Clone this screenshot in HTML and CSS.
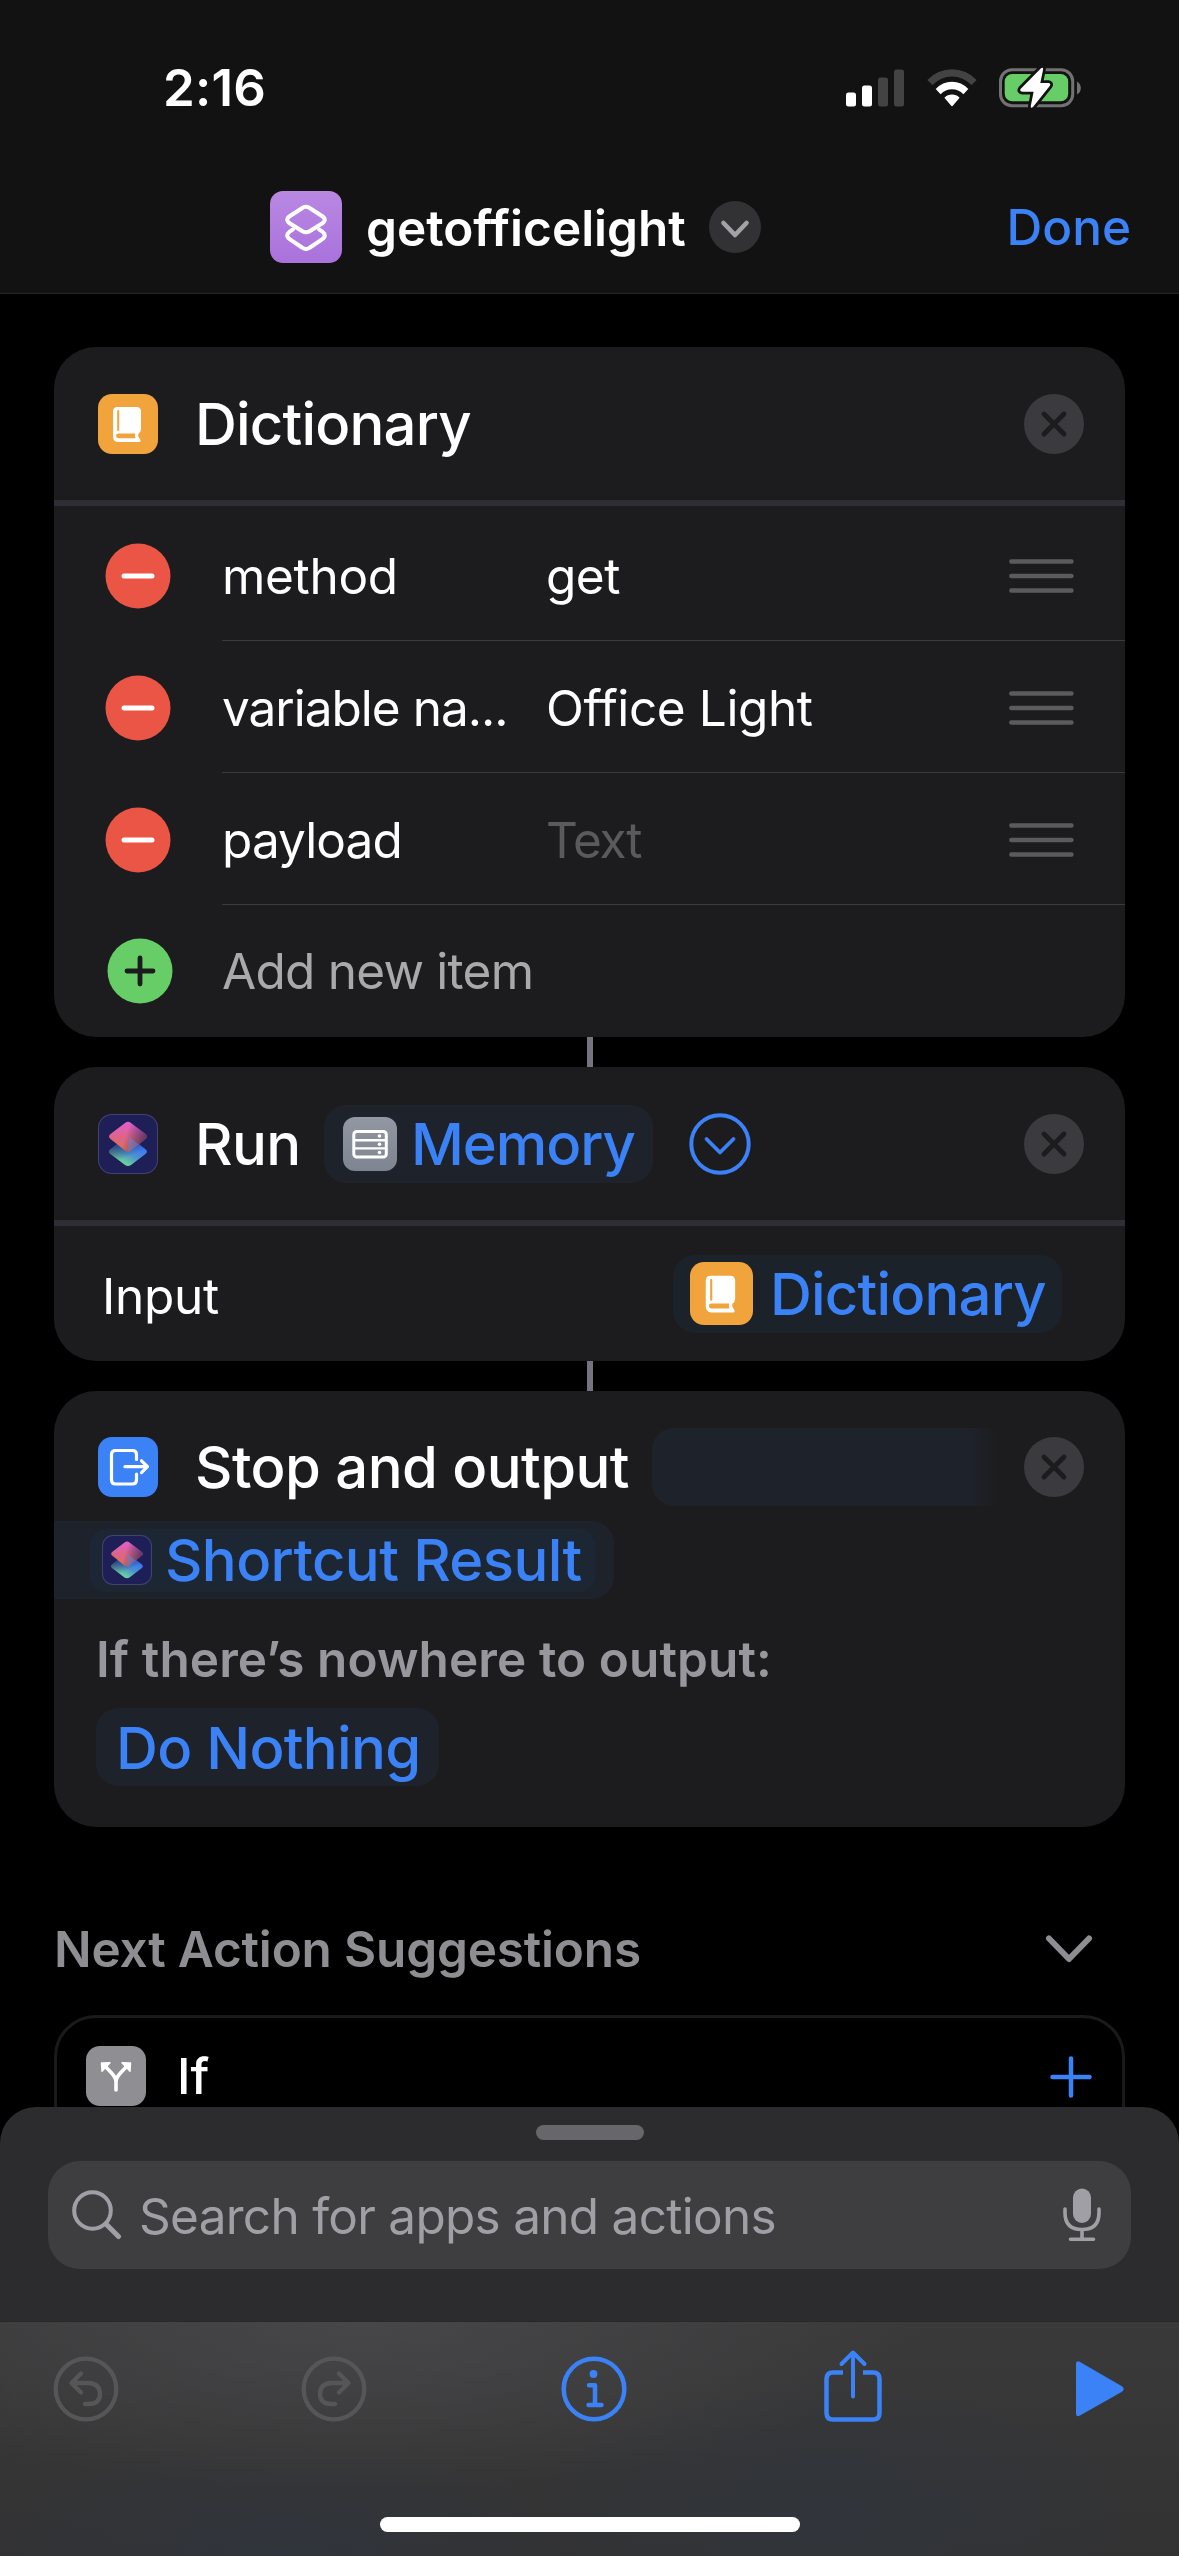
FILE: index.html
```html
<!DOCTYPE html>
<html lang="en">
<head>
<meta charset="utf-8">
<title>getofficelight</title>
<link rel="stylesheet" href="styles.css">
</head>
<body>
<svg class="defs" width="0" height="0" aria-hidden="true">
  <defs>
    <linearGradient id="pink" x1="0.4" y1="0" x2="0.4" y2="1">
      <stop offset="0" stop-color="#ea62d8"/><stop offset="0.5" stop-color="#e8688a"/><stop offset="1" stop-color="#e8704f"/>
    </linearGradient>
    <linearGradient id="shade" x1="0.45" y1="0.4" x2="1" y2="0.55">
      <stop offset="0" stop-color="#1f1f58" stop-opacity="0"/><stop offset="1" stop-color="#1f1f58" stop-opacity="0.7"/>
    </linearGradient>
    <linearGradient id="sea" x1="0.8" y1="0.35" x2="0.4" y2="1">
      <stop offset="0" stop-color="#3a78f4"/><stop offset="0.45" stop-color="#4d92cf"/><stop offset="1" stop-color="#70e08f"/>
    </linearGradient>
    <linearGradient id="seashade" x1="0.1" y1="0.2" x2="0.4" y2="0.75">
      <stop offset="0" stop-color="#1f1f58" stop-opacity="0.8"/><stop offset="1" stop-color="#1f1f58" stop-opacity="0"/>
    </linearGradient>
    <symbol id="shortcuts" viewBox="0 0 60 60">
      <path d="M27 24 Q30 21 33 24 L47.500 35.200 Q50.500 37.500 47.500 40 L33 51 Q30 53 27 51 L12.500 40 Q9.500 37.500 12.500 35.200 Z" fill="url(#sea)"/>
      <path d="M27 24 Q30 21 33 24 L47.500 35.200 Q50.500 37.500 47.500 40 L33 51 Q30 53 27 51 L12.500 40 Q9.500 37.500 12.500 35.200 Z" fill="url(#seashade)"/>
      <path d="M27 9 Q30 6.500 33 9 L47.500 20 Q50.500 22.500 47.500 25 L33 36.500 Q30 39 27 36.500 L12.500 25 Q9.500 22.500 12.500 20 Z" fill="url(#pink)" opacity="0.95"/>
      <path d="M27 9 Q30 6.500 33 9 L47.500 20 Q50.500 22.500 47.500 25 L33 36.500 Q30 39 27 36.500 L12.500 25 Q9.500 22.500 12.500 20 Z" fill="url(#shade)"/>
      <path d="M31 23 L40.500 30.500 L33 36.500 Q31.500 38 30 37 Z" fill="#5a8fe8" opacity="0.45"/>
    </symbol>
    <symbol id="book" viewBox="0 0 60 60">
      <path d="M19.500 13 H38.500 Q43 13 43 17.500 V35 Q43 38 40.500 39.500 Q39.500 42.500 42 45 Q43.500 48 41 48 H20.500 Q15 48 15 42.500 V18 Q15 13 19.500 13 Z" fill="#fff"/>
      <path d="M20.200 17 V36" stroke="#f1a43c" stroke-width="2" stroke-linecap="round"/>
      <path d="M20.500 39.500 H37.300 Q36.700 41.700 37.500 44.200 H20.500 Q18 44.200 18 41.850 Q18 39.500 20.500 39.500 Z" fill="#f1a43c"/>
    </symbol>
    <symbol id="close" viewBox="0 0 60 60">
      <circle cx="30" cy="30" r="30" fill="#3b3a3e"/>
      <path d="M20 20 L40 40 M40 20 L20 40" stroke="#1c1c1e" stroke-width="4.800" stroke-linecap="round"/>
    </symbol>
    <symbol id="minus" viewBox="0 0 66 66">
      <circle cx="33" cy="33" r="32.500" fill="#ea5545"/>
      <path d="M19 33 H47" stroke="#fff" stroke-width="5" stroke-linecap="round"/>
    </symbol>
    <symbol id="grip" viewBox="0 0 66 34">
      <path d="M2.300 2.500 H62.500 M2.300 17 H62.500 M2.300 31.500 H62.500" stroke="#5b5b5f" stroke-width="4.400" stroke-linecap="round"/>
    </symbol>
  </defs>
</svg>

<header class="top">
  <div class="status">
    <span class="clock">2:16</span>
    <div class="indicators">
      <svg width="58" height="38" viewBox="0 0 58 38">
        <rect x="0" y="23.500" width="10" height="14" rx="2.500" fill="#fff"/>
        <rect x="16" y="16.500" width="10" height="21" rx="2.500" fill="#fff"/>
        <rect x="32" y="8.500" width="10" height="29" rx="2.500" fill="#434344"/>
        <rect x="48" y="0.500" width="10" height="37" rx="2.500" fill="#434344"/>
      </svg>
      <svg class="wifi" width="50" height="38" viewBox="0 0 50 38">
        <path d="M0.300 11 Q11 0.300 25 0.300 Q39 0.300 49.700 11 L44.600 16 Q36 7.500 25 7.500 Q14 7.500 5.400 16 Z" fill="#434344"/>
        <path d="M8.700 20 Q15.500 12.800 25 12.800 Q34.500 12.800 41.300 20 L36.400 25.200 Q31.500 20.200 25 20.200 Q18.500 20.200 13.600 25.200 Z" fill="#fff"/>
        <path d="M17.400 28.800 Q20.500 25.600 25 25.600 Q29.500 25.600 32.600 28.800 L25.800 36.800 Q25 37.500 24.200 36.800 Z" fill="#fff"/>
      </svg>
      <svg class="battery" width="84" height="42" viewBox="0 0 84 42">
        <rect x="1.500" y="2.800" width="72.200" height="36" rx="11.500" fill="none" stroke="#727273" stroke-width="3"/>
        <path d="M78 14.500 Q81.800 16.500 81.800 21 Q81.800 25.500 78 27.500 Z" fill="#727273"/>
        <rect x="5.700" y="7" width="63.500" height="27.300" rx="7.500" fill="#67ce67"/>
        <path d="M42 1.200 Q44.500 -0.200 44 3 L41.300 16 H49.500 Q52.300 16.500 50.700 19 L34 40 Q31.500 42 31.800 39 L34.600 24.700 H23.500 Q20 24.300 21.800 21.800 Z" fill="#fff" stroke="#121212" stroke-width="5.500" stroke-linejoin="round" paint-order="stroke"/>
      </svg>
    </div>
  </div>
  <nav class="nav">
    <svg class="app-icon" width="72" height="72" viewBox="0 0 72 72">
      <g fill="none" stroke="#fff" stroke-width="4" stroke-linejoin="round" stroke-linecap="round">
        <path d="M32 17.200 Q36 14.200 40 17.200 L52 25 Q57.500 28.700 52 32.500 L40 40 Q36 42.600 32 40 L20 32.500 Q14.500 28.700 20 25 Z"/>
        <path d="M23 38.300 L20 40.300 Q14.500 44.700 20 48.300 L32 56.500 Q36 59.500 40 56.500 L52 48.300 Q57.500 44.700 52 40.300 L49 38.300"/>
      </g>
    </svg>
    <span class="title">getofficelight</span>
    <svg class="title-menu" width="52" height="52" viewBox="0 0 52 52">
      <circle cx="26" cy="26" r="26" fill="#323234"/>
      <path d="M14.500 22 L26 34 L37.500 22" fill="none" stroke="#a3a2a8" stroke-width="4.600" stroke-linecap="round" stroke-linejoin="round"/>
    </svg>
    <span class="done">Done</span>
  </nav>
</header>

<main class="actions">
  <section class="card">
    <div class="card-head">
      <span class="icon orange"><svg width="60" height="60"><use href="#book"/></svg></span>
      <span class="name t-dictionary">Dictionary</span>
      <svg class="close" width="60" height="60"><use href="#close"/></svg>
    </div>
    <div class="row first">
      <svg class="minus" width="66" height="66"><use href="#minus"/></svg>
      <div class="fields"><span class="t-method">method</span><span class="t-get">get</span><svg class="grip" width="66" height="34"><use href="#grip"/></svg></div>
    </div>
    <div class="row">
      <svg class="minus" width="66" height="66"><use href="#minus"/></svg>
      <div class="fields"><span class="t-variable">variable na...</span><span class="t-office">Office Light</span><svg class="grip" width="66" height="34"><use href="#grip"/></svg></div>
    </div>
    <div class="row">
      <svg class="minus" width="66" height="66"><use href="#minus"/></svg>
      <div class="fields"><span class="t-payload">payload</span><span class="placeholder">Text</span><svg class="grip" width="66" height="34"><use href="#grip"/></svg></div>
    </div>
    <div class="row add">
      <svg class="plus" width="66" height="66" viewBox="0 0 66 66">
        <circle cx="33" cy="33" r="32.500" fill="#67ce67"/>
        <path d="M20 33 H46 M33 20 V46" stroke="#1c1c1e" stroke-width="4.800" stroke-linecap="round"/>
      </svg>
      <div class="fields"><span class="add-label">Add new item</span></div>
    </div>
  </section>
  <div class="link"></div>
  <section class="card">
    <div class="card-head">
      <span class="icon navy"><svg width="60" height="60"><use href="#shortcuts"/></svg></span>
      <span class="name t-run">Run</span>
      <span class="pill memory">
        <svg width="54" height="54" viewBox="0 0 54 54" class="mem-icon">
          <rect x="10.800" y="14.500" width="32.500" height="25.500" rx="3" fill="none" stroke="#fff" stroke-width="3"/>
          <path d="M10 23.200 H44 M10 31.400 H44" stroke="#fff" stroke-width="2.400"/>
          <g fill="#fff"><circle cx="36.500" cy="19" r="1.800"/><circle cx="36.500" cy="27.300" r="1.800"/><circle cx="36.500" cy="35.500" r="1.800"/></g>
        </svg>
        <span class="t-memory">Memory</span>
      </span>
      <svg class="expand" width="62" height="62" viewBox="0 0 62 62">
        <circle cx="31" cy="31" r="28.700" fill="none" stroke="#3b82f7" stroke-width="4"/>
        <path d="M17.500 26 L31 39.500 L44.500 26" fill="none" stroke="#3b82f7" stroke-width="3.800" stroke-linecap="round" stroke-linejoin="round"/>
      </svg>
      <svg class="close" width="60" height="60"><use href="#close"/></svg>
    </div>
    <div class="input-row">
      <span class="t-input">Input</span>
      <span class="pill dict">
        <span class="icon orange big"><svg width="63" height="63"><use href="#book"/></svg></span>
        <span class="t-dictionary">Dictionary</span>
      </span>
    </div>
  </section>
  <div class="link"></div>
  <section class="card output">
    <div class="card-head">
      <span class="icon blue">
        <svg width="60" height="60" viewBox="0 0 60 60" fill="none" stroke="#fff" stroke-width="3.200" stroke-linecap="round" stroke-linejoin="round">
          <path d="M38.500 22.500 V17.500 Q38.500 13.500 34.500 13.500 H17.500 Q13.500 13.500 13.500 17.500 V43 Q13.500 47 17.500 47 H34.500 Q38.500 47 38.500 43 V37"/>
          <path d="M27 29.700 H49 M43.500 23.800 L49.500 29.700 L43.500 35.600"/>
        </svg>
      </span>
      <span class="name t-stop">Stop and output</span>
      <span class="slot"></span>
      <svg class="close" width="60" height="60"><use href="#close"/></svg>
    </div>
    <div class="result">
      <span class="result-token">
        <span class="icon navy small"><svg width="50" height="50"><use href="#shortcuts"/></svg></span>
        <span class="t-result">Shortcut Result</span>
      </span>
    </div>
    <div class="hint">If there’s nowhere to output:</div>
    <span class="pill nothing">Do Nothing</span>
  </section>

  <div class="suggest-head">
    <h2>Next Action Suggestions</h2>
    <svg width="48" height="30" viewBox="0 0 48 30"><path d="M4 4.500 L24 25 L44 4.500" fill="none" stroke="#8d8d92" stroke-width="6" stroke-linecap="round" stroke-linejoin="round"/></svg>
  </div>
  <section class="suggestion">
    <span class="icon gray">
      <svg width="60" height="60" viewBox="0 0 60 60" fill="none" stroke="#fff">
        <path d="M30 44 V36 Q30 32 26 27.500 L18.500 19.500 M30 36 Q30 32 34 27.500 L41.500 19.500" stroke-width="3.600" stroke-linecap="round"/>
        <path d="M15.500 17 L24 16.800 L16 25.200 Z M44.500 17 L36 16.800 L44 25.200 Z" fill="#fff" stroke-width="1.500" stroke-linejoin="round"/>
      </svg>
    </span>
    <span class="t-if">If</span>
    <svg class="add-icon" width="42" height="42" viewBox="0 0 42 42"><path d="M2.500 21 H39.500 M21 2.500 V39.500" stroke="#3b82f7" stroke-width="4.500" stroke-linecap="round"/></svg>
  </section>
</main>

<footer class="sheet">
  <div class="drawer">
    <div class="grabber"></div>
    <div class="search">
      <svg width="50" height="50" viewBox="0 0 50 50" fill="none" stroke="#a09fa6" stroke-linecap="round"><circle cx="20.500" cy="20.500" r="18.300" stroke-width="4"/><path d="M34 34 L46.500 46.500" stroke-width="5"/></svg>
      <span class="t-search">Search for apps and actions</span>
      <svg class="mic" width="38" height="54" viewBox="0 0 38 54">
        <rect x="10" y="0.500" width="18" height="34.500" rx="9" fill="#a09fa6"/>
        <path d="M2 21 V25 Q2 41.500 19 41.500 Q36 41.500 36 25 V21 M19 41.500 V51 M7.500 51.300 H30.500" fill="none" stroke="#a09fa6" stroke-width="3.600" stroke-linecap="round"/>
      </svg>
    </div>
  </div>
  <div class="toolbar">
    <svg width="66" height="66" viewBox="0 0 66 66" fill="none" stroke="#565658" stroke-width="4.300" stroke-linecap="round" stroke-linejoin="round">
      <circle cx="33" cy="33" r="30.300"/><path d="M28 17.500 L18.500 27 L28 36.500 M19.500 27 H35.500 Q47 27.500 47 38 Q47 48 35.500 48 H32"/>
    </svg>
    <svg class="redo" width="66" height="66" viewBox="0 0 66 66" fill="none" stroke="#565658" stroke-width="4.300" stroke-linecap="round" stroke-linejoin="round">
      <circle cx="33" cy="33" r="30.300"/><path d="M38 17.500 L47.500 27 L38 36.500 M46.500 27 H30.500 Q19 27.500 19 38 Q19 48 30.500 48 H34"/>
    </svg>
    <svg class="info" width="66" height="66" viewBox="0 0 66 66" fill="none" stroke="#3b82f7" stroke-width="4.500" stroke-linecap="round" stroke-linejoin="round">
      <circle cx="33" cy="33" r="30.300"/><circle cx="32.500" cy="18" r="3.900" fill="#3b82f7" stroke="none"/><path d="M28 29.300 H34 V49 M27.500 49 H40.500"/>
    </svg>
    <svg class="share" width="58" height="74" viewBox="0 0 58 74" fill="none" stroke="#3b82f7" stroke-width="4.500" stroke-linecap="round" stroke-linejoin="round">
      <path d="M19 23.500 H9 Q2.500 23.500 2.500 30 V64 Q2.500 70.500 9 70.500 H49 Q55.500 70.500 55.500 64 V30 Q55.500 23.500 49 23.500 H39" stroke-linecap="butt"/><path d="M29 4 V47.500" stroke-width="4"/><path d="M17.500 15 L29 3.500 L40.500 15" stroke-width="4"/>
    </svg>
    <svg class="play" width="50" height="58" viewBox="0 0 50 58"><path d="M1 4 Q1 0 5 2 L46.500 26 Q51 29 46.500 32 L5 55.500 Q1 57.500 1 53.500 Z" fill="#3b82f7"/></svg>
  </div>
  <div class="home"></div>
</footer>
</body>
</html>
```
FILE: styles.css
```css
* { box-sizing: border-box; }

body {
  margin: 0;
  width: 1179px;
  height: 2556px;
  position: relative;
  overflow: hidden;
  background: #000;
  color: #fff;
  font-family: Inter, "Liberation Sans", sans-serif;
  font-size: 49.5px;
  line-height: 60px;
  white-space: nowrap;
}

svg { display: block; flex: none; }
.defs { position: absolute; }

.top { height: 294px; background: #121212; border-bottom: 1px solid #262626; }
.status { height: 176px; display: flex; align-items: center; padding: 0 96px 0 163px; }
.clock { font-weight: 600; font-size: 51px; letter-spacing: 0.2px; }
.indicators { display: flex; align-items: center; margin-left: auto; }
.wifi { margin-left: 23px; }
.battery { margin-left: 22px; }

.nav { height: 102px; display: flex; align-items: center; padding: 0 48px 0 270px; }
.app-icon { border-radius: 13px; background: linear-gradient(#b988e2, #a972dc); }
.title { font-weight: 600; margin-left: 24px; width: 343px; padding-top: 1px; }
.done { margin-left: auto; color: #3b82f7; font-weight: 500; }

.actions { padding: 53px 54px 0; display: flex; flex-direction: column; }
.card { background: #1c1c1e; border-radius: 42px; overflow: hidden; }
.card-head {
  height: 159px;
  display: flex;
  align-items: center;
  padding: 0 41px 0 44px;
  border-bottom: 6px solid #2f2e34;
  font-size: 58px;
  font-weight: 500;
}
.name { margin-left: 37px; flex: none; }
.close { margin-left: auto; }

.icon { width: 60px; height: 60px; border-radius: 14px; flex: none; overflow: hidden; }
.orange { background: #f1a43c; }
.navy { background: #1f1f58; box-shadow: inset 0 0 0 1px #43426a; }
.blue { background: #3b82f7; }
.gray { background: #8e8e93; }
.big { width: 63px; height: 63px; }
.small { width: 50px; height: 50px; border-radius: 11px; }

.row { height: 132px; display: flex; align-items: center; }
.minus { margin: 1px 0 0 51px; }
.plus { margin-left: 53px; }
.fields {
  flex: 1;
  align-self: stretch;
  margin-left: 51px;
  padding: 3px 50px 0 0;
  display: grid;
  grid-template-columns: 324px 1fr 66px;
  align-items: center;
  border-bottom: 1px solid #3b3b3d;
}
.first { height: 135px; }
.first .minus { margin-top: 4px; }
.first .fields { padding-top: 6px; }
.grip { margin-top: -1px; }
.add .fields { border: 0; margin-left: 49px; padding: 0; }
.placeholder { color: #5a5a5d; letter-spacing: -1.2px; }
.add-label { color: #a9a9a9; letter-spacing: -0.75px; }

.link { width: 6px; height: 30px; margin-left: 533px; background: #74747c; }

.pill {
  display: flex;
  align-items: center;
  flex: none;
  height: 78px;
  border-radius: 22px;
  background: #1e222a;
  color: #3b82f7;
  font-size: 58px;
  font-weight: 500;
}
.memory { width: 329px; padding-left: 19px; gap: 14px; }
.mem-icon { border-radius: 12px; background: linear-gradient(#9297a1, #7e8590); }
.expand { margin-left: 36px; }
.input-row { height: 135px; display: flex; align-items: center; justify-content: space-between; padding: 0 63px 0 48px; }
.dict { width: 389px; padding-left: 17px; gap: 17px; background: #1c222a; }

.t-dictionary { letter-spacing: -0.8px; }
.t-method { letter-spacing: -0.3px; }
.t-get { letter-spacing: -0.5px; }
.t-variable { letter-spacing: -1px; }
.t-office { letter-spacing: -0.4px; }
.t-payload { letter-spacing: -0.9px; }
.t-run { letter-spacing: -0.6px; width: 129px; }
.t-memory { letter-spacing: -1.1px; }
.t-input { letter-spacing: -0.3px; padding-top: 4px; }
.t-stop { letter-spacing: -0.55px; width: 457px; }
.t-result { letter-spacing: -0.6px; }

.output { height: 436px; }
.output .card-head { height: 130px; border: 0; padding-top: 22px; }
.slot {
  width: 348px;
  height: 78px;
  border-radius: 22px 0 0 22px;
  background: linear-gradient(90deg, #1e222a 318px, #1c1c1e 346px);
}
.result { width: 560px; height: 78px; padding: 0 0 0 36px; display: flex; align-items: center; background: #1e222a; border-radius: 0 22px 22px 0; }
.result-token {
  width: 505px;
  height: 63px;
  border-radius: 16px;
  padding-left: 12px;
  display: flex;
  align-items: center;
  gap: 13px;
  background: #1c2733;
  color: #3b82f7;
  font-size: 58px;
  font-weight: 500;
}
.hint { padding: 30px 0 0 42px; color: #98979e; font-weight: 600; height: 109px; letter-spacing: 0.1px; }
.nothing { width: 343px; margin-left: 42px; padding: 2px 0 0 20px; letter-spacing: -0.7px; }

.suggest-head { display: flex; align-items: center; justify-content: space-between; padding: 0 32px 0 0; margin-top: 92px; height: 60px; }
h2 { margin: 0; font-size: inherit; font-weight: 600; color: #8d8d92; letter-spacing: -0.18px; }
.suggestion {
  height: 160px;
  margin-top: 36px;
  padding: 28px 31px 0 29px;
  display: flex;
  align-items: flex-start;
  border: 3px solid #1a1a1b;
  border-radius: 42px;
  font-weight: 500;
}
.t-if { margin-left: 31px; }
.add-icon { margin: 10px -1px 0 auto; }

.sheet { position: absolute; left: 0; right: 0; top: 2107px; height: 449px; border-radius: 36px 36px 0 0; overflow: hidden; background: #2c2c2e; }
.drawer { height: 215px; padding: 18px 48px 0; border-bottom: 1px solid #29292a; }
.grabber { width: 108px; height: 15px; border-radius: 8px; margin: 0 auto 21px; background: #67666b; }
.search { height: 108px; border-radius: 32px; background: #3e3e40; display: flex; align-items: center; padding: 0 30px 0 24px; color: #a09fa6; }
.t-search { margin-left: 17px; letter-spacing: -0.72px; padding-top: 2px; }
.mic { margin-left: auto; }
.toolbar {
  height: 234px;
  display: flex;
  align-items: flex-start;
  padding: 34px 0 0 53px;
  background:
    radial-gradient(ellipse 560px 170px at 360px 0, rgba(72, 72, 74, 0.9), rgba(60, 60, 62, 0)),
    radial-gradient(ellipse 300px 110px at 280px 234px, rgba(47, 53, 64, 0.7), rgba(47, 53, 64, 0)),
    radial-gradient(ellipse 300px 140px at 830px 200px, rgba(48, 53, 60, 0.9), rgba(48, 53, 60, 0)),
    linear-gradient(#3a3a3b, #323233);
}
.redo { margin-left: 182px; }
.info { margin-left: 194px; }
.share { margin: -7px 0 0 197px; }
.play { margin: 4px 0 0 193px; }
.home { position: absolute; left: 380px; bottom: 24px; width: 420px; height: 15px; border-radius: 8px; background: #fff; }
```
